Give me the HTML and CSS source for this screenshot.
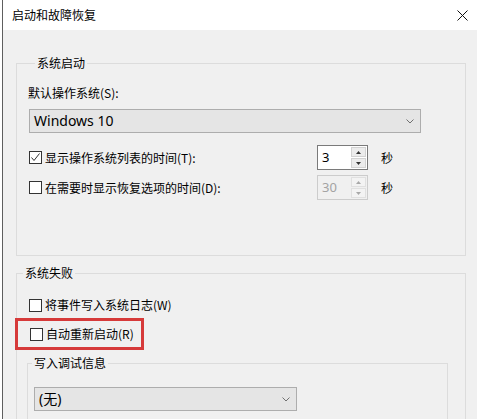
FILE: index.html
```html
<!DOCTYPE html>
<html lang="zh-CN">
<head>
    <meta charset="UTF-8">
    <title>启动和故障恢复</title>
    <link rel="stylesheet" href="styles.css">
</head>
<body>
    <div class="window">
        <div class="titlebar">
            <span class="title">启动和故障恢复</span>
            <svg class="close" width="11" height="11" viewBox="0 0 11 11"><path d="M0.5 0.5 L10.5 10.5 M10.5 0.5 L0.5 10.5" stroke="#111" stroke-width="1" fill="none"/></svg>
        </div>

        <div class="content">
            <fieldset class="group group-startup">
                <legend>系统启动</legend>
                <div class="field-label">默认操作系统(S):</div>
                <div class="combo combo-os">
                    <span>Windows 10</span>
                    <svg class="chevron" width="8" height="5" viewBox="0 0 8 5"><path d="M0.5 0.5 L4 4 L7.5 0.5" stroke="#707070" fill="none"/></svg>
                </div>

                <div class="timer-row first">
                    <label class="check">
                        <span class="box">
                            <svg width="11" height="11" viewBox="0 0 11 11"><path d="M1.5 5.5 L4 8.5 L9.5 1.5" stroke="#333" fill="none"/></svg>
                        </span>
                        显示操作系统列表的时间(T):
                    </label>
                    <div class="spin">
                        <span class="spin-value">3</span>
                        <span class="spin-btns">
                            <span class="spin-btn"><svg width="5" height="3" viewBox="0 0 5 3"><path d="M0 3 L2.5 0 L5 3 Z" fill="#333"/></svg></span>
                            <span class="spin-btn"><svg width="5" height="3" viewBox="0 0 5 3"><path d="M0 0 L2.5 3 L5 0 Z" fill="#333"/></svg></span>
                        </span>
                    </div>
                    <span class="unit">秒</span>
                </div>

                <div class="timer-row">
                    <label class="check">
                        <span class="box"></span>
                        在需要时显示恢复选项的时间(D):
                    </label>
                    <div class="spin disabled">
                        <span class="spin-value">30</span>
                        <span class="spin-btns">
                            <span class="spin-btn"><svg width="5" height="3" viewBox="0 0 5 3"><path d="M0 3 L2.5 0 L5 3 Z" fill="#a8a8a8"/></svg></span>
                            <span class="spin-btn"><svg width="5" height="3" viewBox="0 0 5 3"><path d="M0 0 L2.5 3 L5 0 Z" fill="#a8a8a8"/></svg></span>
                        </span>
                    </div>
                    <span class="unit">秒</span>
                </div>
            </fieldset>

            <fieldset class="group group-failure">
                <legend>系统失败</legend>
                <label class="check event-log">
                    <span class="box"></span>
                    将事件写入系统日志(W)
                </label>
                <div class="highlight">
                    <label class="check">
                        <span class="box"></span>
                        自动重新启动(R)
                    </label>
                </div>

                <fieldset class="group group-debug">
                    <legend>写入调试信息</legend>
                    <div class="combo combo-debug">
                        <span>(无)</span>
                        <svg class="chevron" width="8" height="5" viewBox="0 0 8 5"><path d="M0.5 0.5 L4 4 L7.5 0.5" stroke="#707070" fill="none"/></svg>
                    </div>
                </fieldset>
            </fieldset>
        </div>
    </div>
</body>
</html>
```

FILE: styles.css
```css
*,
*::before,
*::after {
    box-sizing: border-box;
}

:root {
    --clr-face: #f0f0f0;
    --clr-line: #dcdcdc;
    --clr-combo: #e5e5e5;
    --clr-combo-border: #adadad;
    --clr-mark: #d63a3a;

    --ff-ui: "Noto Sans", "Noto Sans CJK SC", sans-serif;
    --ff-cjk: "Noto Sans CJK SC", sans-serif;
}

body {
    width: 482px;
    height: 419px;
    margin: 0;
    overflow: hidden;
    background: #fff;
    color: #000;
    font-family: var(--ff-ui);
    font-size: 12px;
    line-height: 16px;
}

.window {
    display: flex;
    flex-direction: column;
    height: 419px;
    margin-left: 2px;
    border-left: 1px solid #5e5e5e;
}

.titlebar {
    display: flex;
    flex-shrink: 0;
    justify-content: space-between;
    align-items: center;
    height: 30px;
    padding: 0 14px 0 9px;
    background: #fff;
}

.title {
    font-family: var(--ff-cjk);
    font-size: 12px;
}

.close {
    margin-top: 1px;
}

.content {
    flex: 1;
    min-height: 0;
    overflow: hidden;
    margin-right: 5px;
    padding: 25px 0 0 13px;
    background: var(--clr-face);
}

.group {
    min-width: 0;
    margin: 0;
    padding: 0;
    border: 1px solid var(--clr-line);
}

.group legend {
    margin-left: 6px;
    padding: 0 2px;
    line-height: 16px;
    font-family: var(--ff-cjk);
}

.group-startup {
    width: 450px;
    height: 201px;
    padding-left: 12px;
}

.field-label {
    margin-top: 14px;
    margin-left: -1px;
    font-family: var(--ff-cjk);
}

.combo {
    display: flex;
    justify-content: space-between;
    align-items: center;
    height: 24px;
    padding: 0 6px 0 4px;
    background: var(--clr-combo);
    border: 1px solid var(--clr-combo-border);
    font-size: 14px;
}

.combo-os {
    width: 392px;
    margin-top: 8px;
}

.timer-row {
    display: flex;
    align-items: center;
    height: 25px;
    margin-top: 5px;
}

.timer-row.first {
    margin-top: 12px;
}

.timer-row .check {
    width: 288px;
}

.check {
    display: flex;
    align-items: center;
    height: 16px;
    font-family: var(--ff-cjk);
}

.box {
    display: flex;
    justify-content: center;
    align-items: center;
    width: 13px;
    height: 13px;
    margin-right: 3px;
    background: #fff;
    border: 1px solid #333;
}

.spin {
    display: flex;
    justify-content: space-between;
    width: 51px;
    height: 25px;
    padding: 1px;
    background: #fff;
    border: 1px solid #7a7a7a;
}

.spin-value {
    padding-left: 3px;
    line-height: 20px;
    font-size: 13px;
}

.spin-btns {
    display: flex;
    flex-direction: column;
    gap: 1px;
    width: 15px;
}

.spin-btn {
    display: flex;
    justify-content: center;
    align-items: center;
    flex: 1;
    background: #ececec;
    border: 1px solid #d2d2d2;
}

.spin.disabled {
    background: var(--clr-face);
    border-color: #cccccc;
    color: #a3a3a3;
}

.spin.disabled .spin-btn {
    background: #f3f3f3;
    border-color: #e0e0e0;
}

.unit {
    margin-left: 13px;
    font-family: var(--ff-cjk);
}

.group-failure {
    width: 450px;
    height: 200px;
    margin-top: 9px;
}

.event-log {
    margin-top: 16px;
    margin-left: 12px;
}

.highlight {
    display: flex;
    align-items: center;
    width: 129px;
    height: 32px;
    margin-top: 5px;
    margin-left: -2px;
    padding-left: 12px;
    border: 3px solid var(--clr-mark);
}

.group-debug {
    width: 421px;
    height: 90px;
    margin-top: 5px;
    margin-left: 10px;
}

.group-debug legend {
    margin-left: 4px;
}

.combo-debug {
    width: 263px;
    margin-top: 16px;
    margin-left: 6px;
}
```
